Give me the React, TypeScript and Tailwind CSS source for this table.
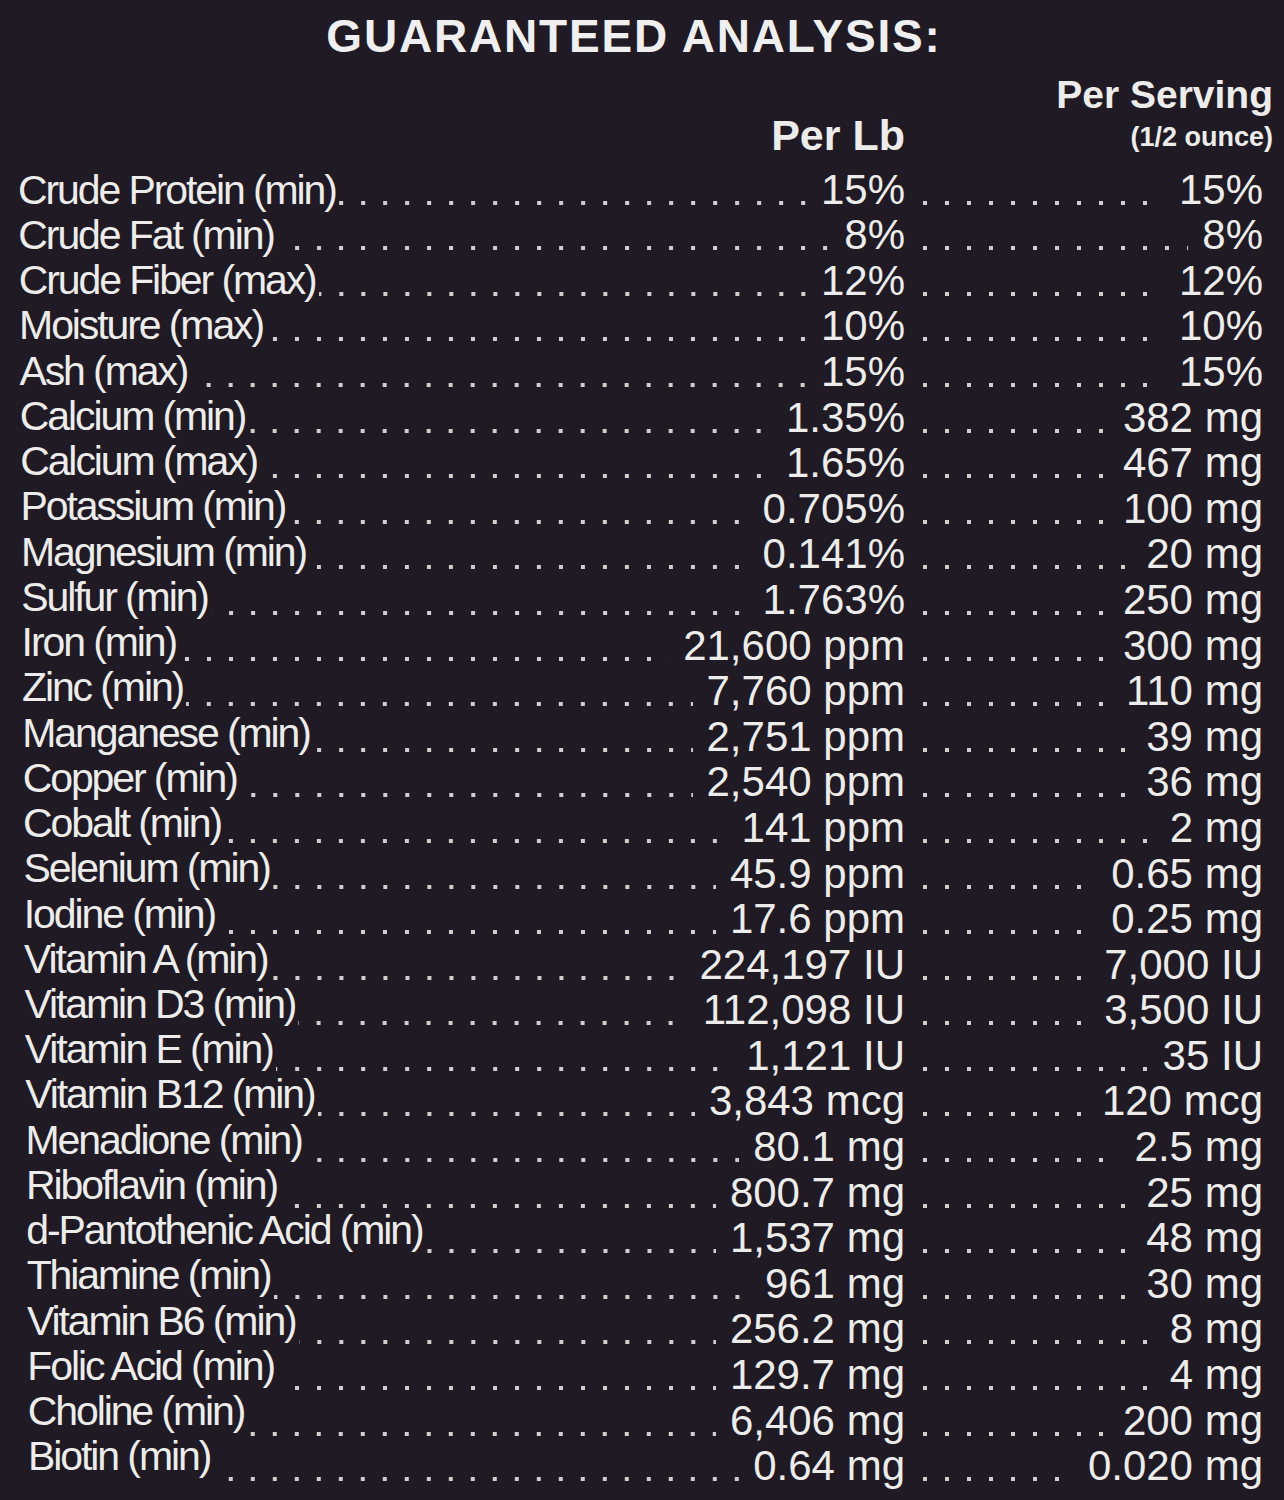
import React from "react";

type Row = { label: string; lb: string; serving: string };

const rows: Row[] = [
  { label: "Crude Protein (min)", lb: "15%", serving: "15%" },
  { label: "Crude Fat (min)", lb: "8%", serving: "8%" },
  { label: "Crude Fiber (max)", lb: "12%", serving: "12%" },
  { label: "Moisture (max)", lb: "10%", serving: "10%" },
  { label: "Ash (max)", lb: "15%", serving: "15%" },
  { label: "Calcium (min)", lb: "1.35%", serving: "382 mg" },
  { label: "Calcium (max)", lb: "1.65%", serving: "467 mg" },
  { label: "Potassium (min)", lb: "0.705%", serving: "100 mg" },
  { label: "Magnesium (min)", lb: "0.141%", serving: "20 mg" },
  { label: "Sulfur (min)", lb: "1.763%", serving: "250 mg" },
  { label: "Iron (min)", lb: "21,600 ppm", serving: "300 mg" },
  { label: "Zinc (min)", lb: "7,760 ppm", serving: "110 mg" },
  { label: "Manganese (min)", lb: "2,751 ppm", serving: "39 mg" },
  { label: "Copper (min)", lb: "2,540 ppm", serving: "36 mg" },
  { label: "Cobalt (min)", lb: "141 ppm", serving: "2 mg" },
  { label: "Selenium (min)", lb: "45.9 ppm", serving: "0.65 mg" },
  { label: "Iodine (min)", lb: "17.6 ppm", serving: "0.25 mg" },
  { label: "Vitamin A (min)", lb: "224,197 IU", serving: "7,000 IU" },
  { label: "Vitamin D3 (min)", lb: "112,098 IU", serving: "3,500 IU" },
  { label: "Vitamin E (min)", lb: "1,121 IU", serving: "35 IU" },
  { label: "Vitamin B12 (min)", lb: "3,843 mcg", serving: "120 mcg" },
  { label: "Menadione (min)", lb: "80.1 mg", serving: "2.5 mg" },
  { label: "Riboflavin (min)", lb: "800.7 mg", serving: "25 mg" },
  { label: "d-Pantothenic Acid (min)", lb: "1,537 mg", serving: "48 mg" },
  { label: "Thiamine (min)", lb: "961 mg", serving: "30 mg" },
  { label: "Vitamin B6 (min)", lb: "256.2 mg", serving: "8 mg" },
  { label: "Folic Acid (min)", lb: "129.7 mg", serving: "4 mg" },
  { label: "Choline (min)", lb: "6,406 mg", serving: "200 mg" },
  { label: "Biotin (min)", lb: "0.64 mg", serving: "0.020 mg" },
];

export default function App() {
  return (
    <div className="min-h-[1500px] w-[1284px] bg-[#1f1a23] font-['Liberation_Sans',Arial,sans-serif] text-[#ececea]">
      <div className="pt-[13px] pr-[16px] text-center text-[46px] font-bold leading-none tracking-[1.8px] text-[#efefef]">
        GUARANTEED ANALYSIS:
      </div>

      <div className="mt-[16px] flex items-end">
        <div className="flex w-[905px] justify-end">
          <span className="text-[43px] font-bold leading-none">Per Lb</span>
        </div>
        <div className="flex flex-1 flex-col items-end pr-[11px] pb-[6px]">
          <span className="text-[39px] font-bold leading-none">Per Serving</span>
          <span className="mt-[10px] text-[27px] font-bold leading-none">(1/2 ounce)</span>
        </div>
      </div>

      <div className="mt-[8px]">
        {rows.map((r, i) => (
          <div key={r.label} className="flex h-[45.6px] items-end">
            <div className="flex w-[905px] items-end">
              <span
                className="whitespace-nowrap text-[41px] leading-none tracking-[-2.1px]"
                style={{ paddingLeft: 18 + i * 0.36, paddingBottom: i * 0.35 }}
              >
                {r.label}
              </span>
              <div className="mb-[6px] ml-[3px] mr-[14px] h-[4px] flex-1 bg-fixed bg-[linear-gradient(to_right,#cfcfcf_4px,transparent_4px)] bg-[length:22px_4px] bg-[position:9px_0]" />
              <span className="whitespace-nowrap text-[42px] leading-none">{r.lb}</span>
            </div>
            <div className="flex w-[358px] items-end">
              <div className="mb-[6px] ml-[14px] mr-[14px] h-[4px] flex-1 bg-fixed bg-[linear-gradient(to_right,#cfcfcf_4px,transparent_4px)] bg-[length:22px_4px] bg-[position:21px_0]" />
              <span className="whitespace-nowrap text-[42px] leading-none">{r.serving}</span>
            </div>
          </div>
        ))}
      </div>
    </div>
  );
}
